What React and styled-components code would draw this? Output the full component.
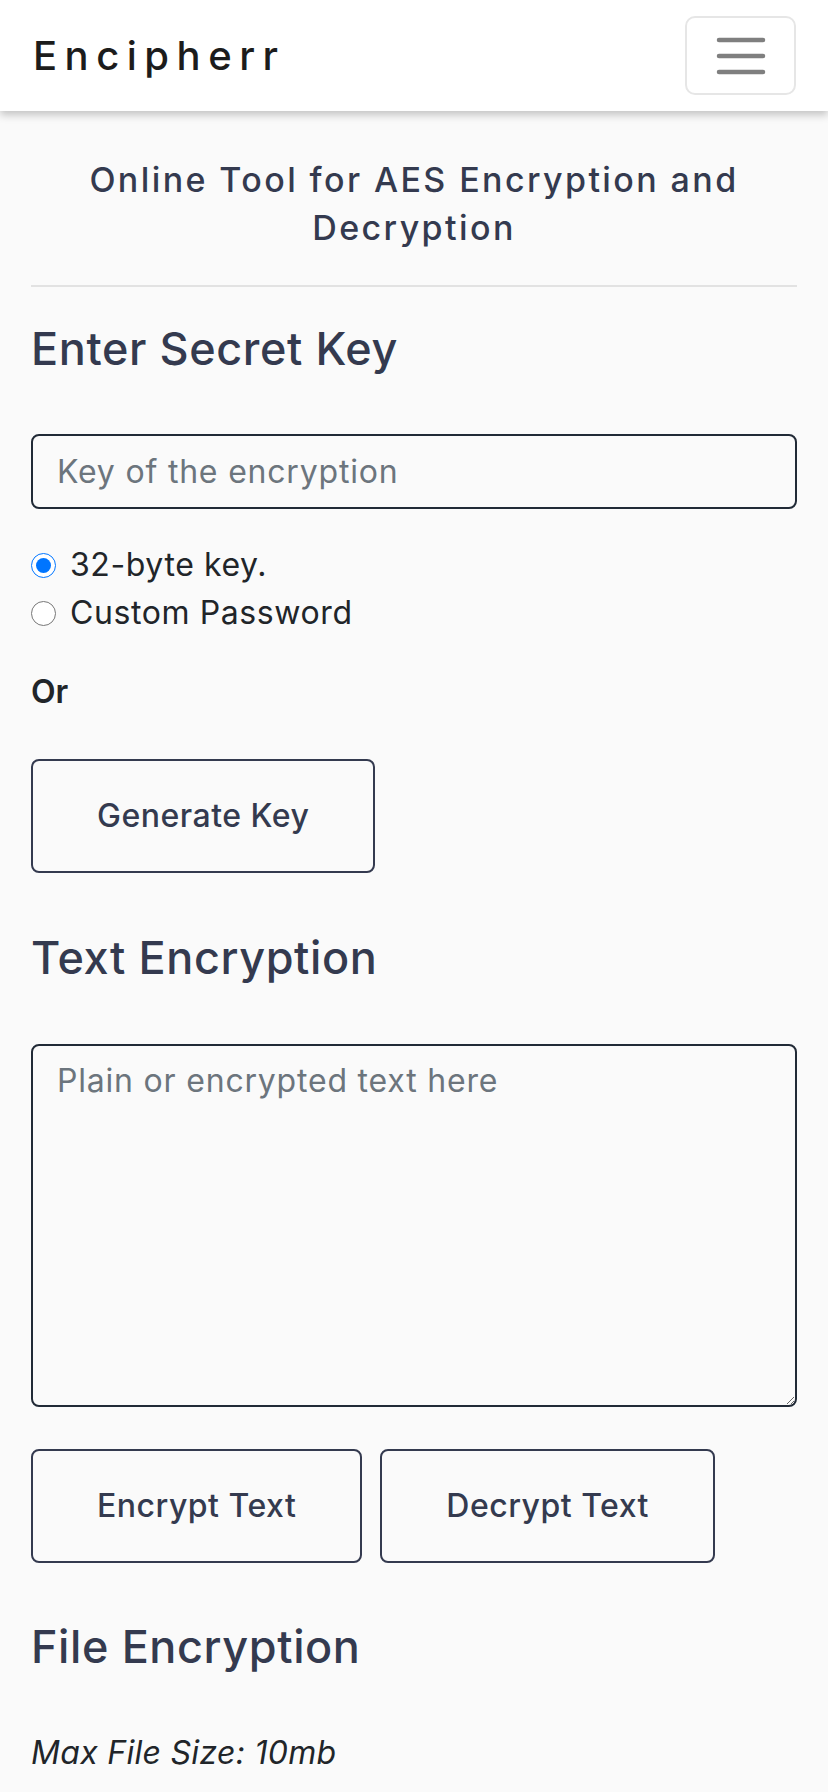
import React from 'react';
import styled, { createGlobalStyle } from 'styled-components';

const GlobalStyle = createGlobalStyle`
    body{
        margin: 0;
        background: #fafafa;
        font-family: Inter, "Noto Sans", sans-serif;
        color: #212529;
    }
    *{ box-sizing: border-box; }
`;

const StyledNav = styled.nav`
    height: 111px;
    background: #fff;
    box-shadow: 0 4px 8px rgba(0,0,0,0.22);
    display: flex;
    align-items: center;
    justify-content: space-between;
    padding: 0 32px 0 33px;
    position: relative;
    z-index: 10;
`;

const Brand = styled.a`
    font-size: 40px;
    line-height: 1;
    font-weight: 500;
    letter-spacing: 7.5px;
    color: #1c1c1c;
    text-decoration: none;
`;

const Toggler = styled.button`
    width: 111px;
    height: 79px;
    border: 2px solid #e6e6e6;
    border-radius: 10px;
    background: transparent;
    display: flex;
    align-items: center;
    justify-content: center;
    padding: 0;
`;

const StyledMain = styled.main`
    padding: 0 31px 40px;
`;

const Subtitle = styled.h5`
    margin: 45px 0 0;
    font-size: 34px;
    line-height: 48px;
    font-weight: 500;
    letter-spacing: 2.4px;
    text-align: center;
    color: #343a4f;
`;

const Rule = styled.hr`
    margin: 33px 0 0;
    border: 0;
    height: 2px;
    background: #e2e2e2;
`;

const Heading = styled.h3`
    margin: ${(p) => p.$top}px 0 0;
    font-size: 45px;
    line-height: 54px;
    font-weight: 500;
    letter-spacing: 0.6px;
    color: #343a4f;
`;

const field = `
    display: block;
    width: 100%;
    border: 2px solid #212a36;
    border-radius: 8px;
    background: transparent;
    font-family: Inter, "Noto Sans", sans-serif;
    font-size: 32px;
    line-height: 48px;
    letter-spacing: 0.8px;
    color: #212529;
    padding: 11.5px 24px;
    &::placeholder{ color: #6c757d; }
    &:focus{ outline: none; }
`;

const KeyInput = styled.input`
    ${field}
    margin-top: 58px;
    height: 75px;
`;

const TextArea = styled.textarea`
    ${field}
    margin-top: 59px;
    height: 363px;
    padding-top: 10.5px;
    resize: vertical;
`;

const RadioGroup = styled.div`
    margin-top: 32px;
    display: flex;
    flex-direction: column;
`;

const RadioRow = styled.label`
    display: flex;
    align-items: center;
    gap: 14px;
    font-size: 32px;
    line-height: 48px;
    letter-spacing: 0.6px;
    color: #212529;
    input{
        width: 25px;
        height: 25px;
        margin: 0;
    }
`;

const OrText = styled.p`
    margin: 31px 0 0;
    font-size: 32px;
    line-height: 48px;
    font-weight: 600;
    color: #212529;
`;

const ButtonRow = styled.div`
    margin-top: ${(p) => p.$top}px;
    display: flex;
    gap: 18px;
`;

const OutlineButton = styled.button`
    border: 2px solid #343a4f;
    border-radius: 8px;
    background: transparent;
    padding: 31px 64px;
    font-family: Inter, "Noto Sans", sans-serif;
    font-size: 32px;
    line-height: 48px;
    font-weight: 500;
    letter-spacing: 0.5px;
    color: #343a4f;
`;

const Note = styled.p`
    margin: 55px 0 0;
    font-size: 32px;
    line-height: 48px;
    font-style: italic;
    letter-spacing: 0.3px;
    color: #212529;
`;

const MenuIcon = () => (
    <svg width='52' height='40' viewBox='0 0 52 40'>
        <g stroke='#7f7f7f' strokeWidth='4.5' strokeLinecap='round'>
            <line x1='4' y1='4' x2='48' y2='4' />
            <line x1='4' y1='20' x2='48' y2='20' />
            <line x1='4' y1='36' x2='48' y2='36' />
        </g>
    </svg>
);

const App = () => {
    return(
        <>
            <GlobalStyle />
            <StyledNav>
                <Brand href='#'>Encipherr</Brand>
                <Toggler aria-label='menu'><MenuIcon /></Toggler>
            </StyledNav>
            <StyledMain>
                <Subtitle>Online Tool for AES Encryption and Decryption</Subtitle>
                <Rule />
                <Heading $top={35}>Enter Secret Key</Heading>
                <KeyInput type='text' placeholder='Key of the encryption' />
                <RadioGroup>
                    <RadioRow><input type='radio' name='keytype' defaultChecked />32-byte key.</RadioRow>
                    <RadioRow><input type='radio' name='keytype' />Custom Password</RadioRow>
                </RadioGroup>
                <OrText>Or</OrText>
                <ButtonRow $top={43}>
                    <OutlineButton>Generate Key</OutlineButton>
                </ButtonRow>
                <Heading $top={58}>Text Encryption</Heading>
                <TextArea placeholder='Plain or encrypted text here' />
                <ButtonRow $top={42}>
                    <OutlineButton>Encrypt Text</OutlineButton>
                    <OutlineButton>Decrypt Text</OutlineButton>
                </ButtonRow>
                <Heading $top={57}>File Encryption</Heading>
                <Note>Max File Size: 10mb</Note>
            </StyledMain>
        </>
    );
}

export default App;
